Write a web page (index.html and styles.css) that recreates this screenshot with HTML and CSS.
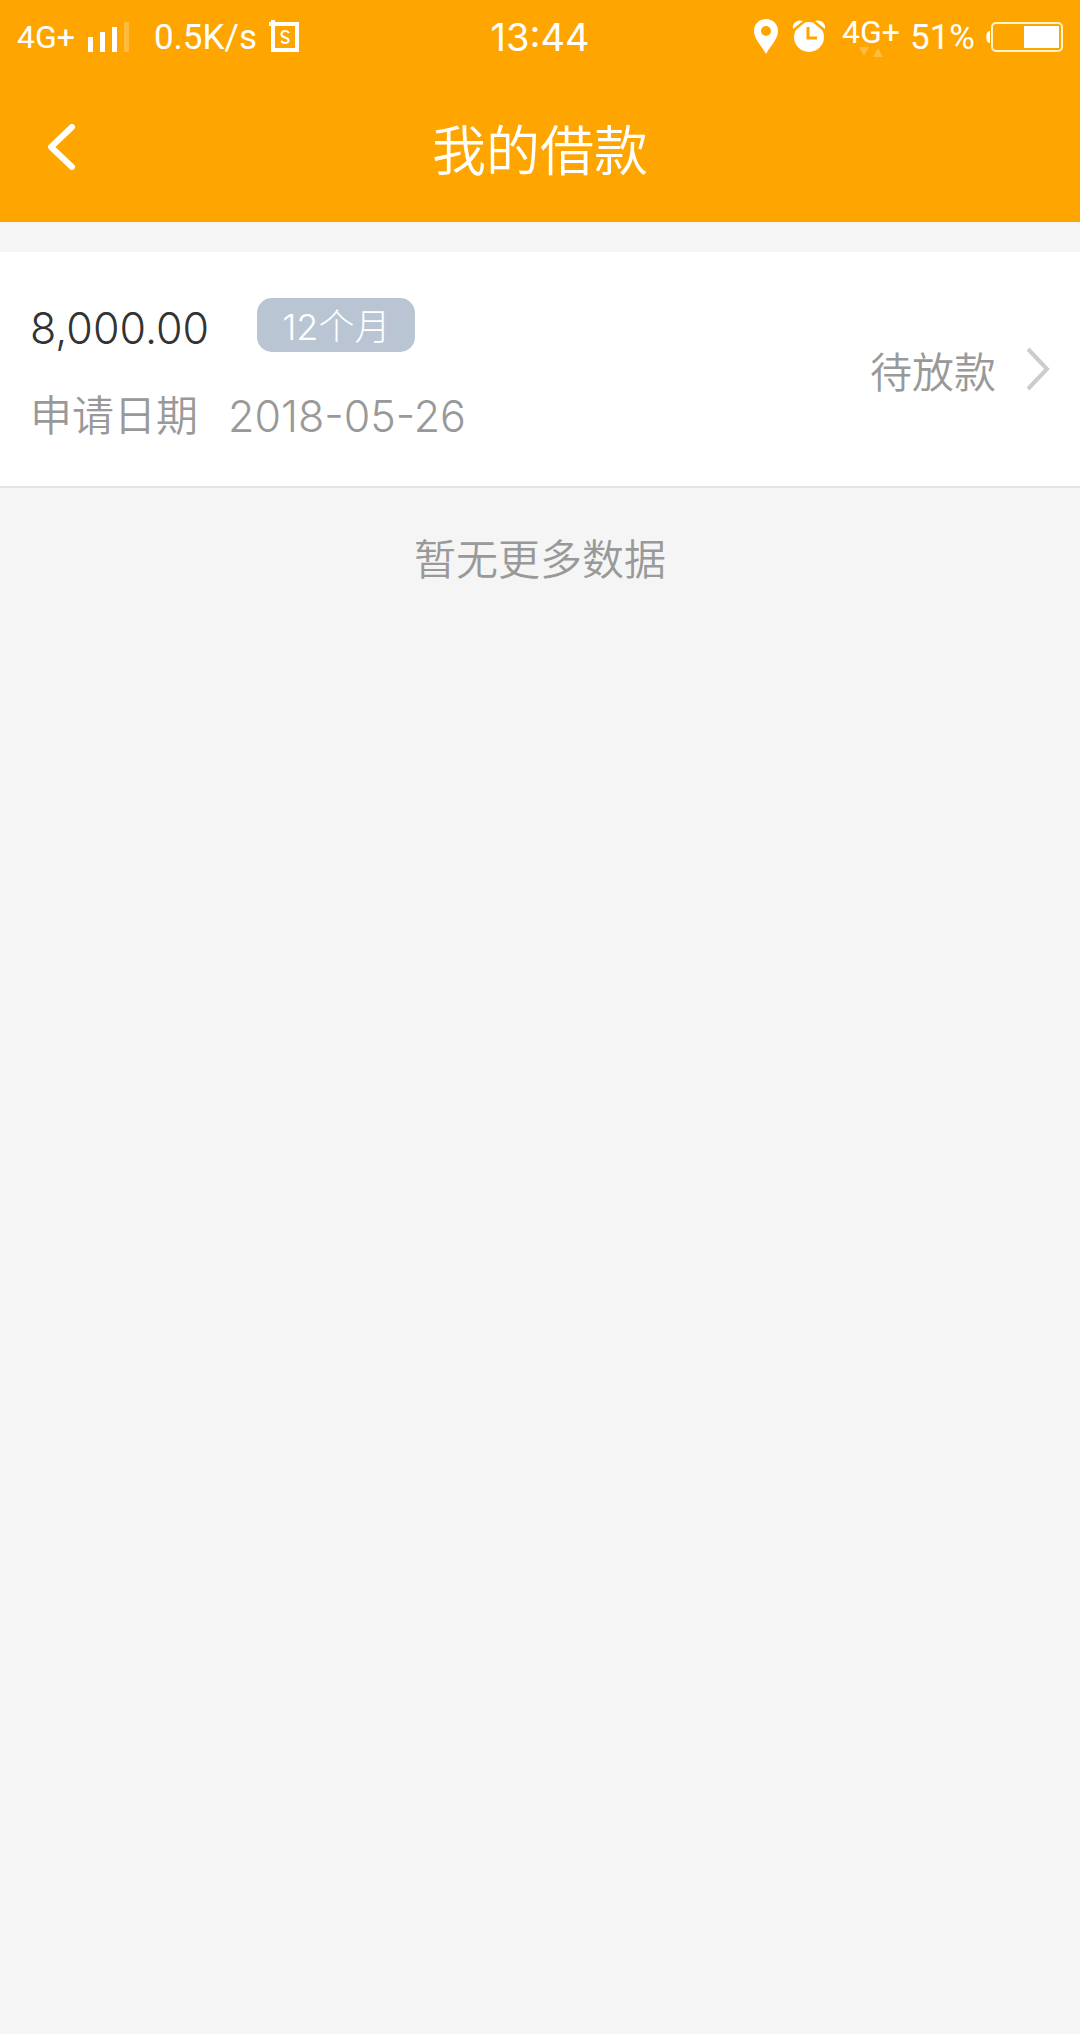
FILE: index.html
```html
<!DOCTYPE html>
<html lang="zh-CN">
<head>
  <meta charset="UTF-8" />
  <meta name="viewport" content="width=device-width, initial-scale=1.0" />
  <title>我的借款</title>
  <link rel="stylesheet" href="styles.css">
</head>
<body>

  <header class="top">
    <!-- Status bar -->
    <div class="status-bar">
      <div class="status-left">
        <span class="network">4G+</span>
        <svg class="signal" width="42" height="30" viewBox="0 0 42 30" fill="#fff" aria-hidden="true">
          <path d="M0 15h5v15H0zM12 10h5v20h-5zM24 5h5v25h-5z" />
          <path d="M36 0h5v30h-5z" opacity=".25" />
        </svg>
        <span class="speed">0.5K/s</span>
        <svg class="badge-s" width="30" height="34" viewBox="0 0 30 34" fill="none" stroke="#fff" aria-hidden="true">
          <path d="M4 4h24v26H4z" stroke-width="4" />
          <path d="M0 4h4M4 0v4" stroke-width="4" />
          <path d="M20 13c-1-2-3-2-4-2-4 0-5 5-1 6l2 1c4 1 3 5-1 5-2 0-3-1-4-2" stroke-width="2" />
        </svg>
      </div>
      <time class="clock">13:44</time>
      <div class="status-right">
        <svg width="24" height="36" viewBox="0 0 24 36" aria-hidden="true">
          <path fill="#fff" fill-rule="evenodd" d="M12 0C5 0 0 5 0 12c0 8 7 14 12 23 5-9 12-15 12-23C24 5 19 0 12 0zm0 7a5 5 0 1 1 0 10 5 5 0 0 1 0-10z" />
        </svg>
        <svg class="alarm" width="34" height="36" viewBox="0 0 34 36" aria-hidden="true">
          <circle cx="17" cy="18" r="15" fill="#fff" />
          <path d="M1 10 11 2C5 0 0 4 1 10zM33 10 23 2c6-2 11 2 10 8z" fill="#fff" />
          <path d="M0 13 12 3M34 13 22 3" stroke="#ffa500" stroke-width="2" />
          <path d="M16 8v11h9" fill="none" stroke="#ffa500" stroke-width="3" />
        </svg>
        <span class="data">
          <span class="network">4G+</span>
          <svg class="arrows" width="24" height="10" viewBox="0 0 24 10" fill="#fff" opacity=".25" aria-hidden="true">
            <path d="M0 0h10L5 9zM14 10h10l-5-9z" />
          </svg>
        </span>
        <span class="percent">51%</span>
        <svg class="battery" width="78" height="30" viewBox="0 0 78 30" aria-hidden="true">
          <path d="M5 9v12c-5 0-5-12 0-12z" fill="#fff" />
          <rect x="7" y="1" width="70" height="28" rx="4" fill="none" stroke="#fff5cf" stroke-width="2" />
          <path d="M39 4h35v22H39z" fill="#fff" />
        </svg>
      </div>
    </div>

    <!-- Title bar -->
    <nav class="nav-bar">
      <button class="back" type="button" aria-label="返回">
        <svg width="28" height="46" viewBox="0 0 28 46" fill="none" stroke="#fff" stroke-width="6" stroke-linecap="round" stroke-linejoin="round">
          <path d="M24 3 3 23l21 20" />
        </svg>
      </button>
      <h1>我的借款</h1>
    </nav>
  </header>

  <main>
    <a class="loan" href="#">
      <div class="loan-info">
        <div class="loan-row">
          <span class="amount">8,000.00</span>
          <span class="term">12个月</span>
        </div>
        <div class="loan-date">
          <span>申请日期</span>
          <time class="date" datetime="2018-05-26">2018-05-26</time>
        </div>
      </div>
      <div class="loan-state">
        <span>待放款</span>
        <svg width="24" height="44" viewBox="0 0 24 44" fill="none" stroke="#ccc" stroke-width="4" aria-hidden="true">
          <path d="M2 2l19 20L2 42" />
        </svg>
      </div>
    </a>
    <p class="no-more">暂无更多数据</p>
  </main>

</body>
</html>
```
FILE: styles.css
```css
* {
  box-sizing: border-box;
}

body {
  margin: 0;
  min-height: 100vh;
  background: #f5f5f5;
  color: #333;
  font-family: Inter, 'Noto Sans CJK SC', sans-serif;
  font-size: 42px;
  font-weight: 350;
}

.top {
  background: #ffa500;
  color: #fff;
}

/* Status bar */
.status-bar {
  display: grid;
  grid-template-columns: 1fr auto 1fr;
  align-items: center;
  height: 74px;
  padding: 0 17px;
  font-family: Roboto, sans-serif;
  font-size: 35px;
  font-weight: 400;
  line-height: 40px;
}

.status-left,
.status-right {
  display: flex;
  align-items: center;
}

.status-right {
  justify-content: flex-end;
}

.network {
  font-size: 32px;
}

.signal {
  margin: 0 24px 0 13px;
}

.speed,
.percent {
  padding-top: 2px;
}

.badge-s {
  margin-left: 12px;
}

.clock {
  font-family: Inter, sans-serif;
  font-size: 38px;
}

.alarm {
  margin: 0 16px 0 14px;
}

.data {
  display: flex;
  flex-direction: column;
  align-items: center;
  line-height: 30px;
}

.percent {
  margin: 0 10px;
}

/* Title bar */
.nav-bar {
  display: grid;
  grid-template-columns: 1fr auto 1fr;
  align-items: center;
  height: 148px;
  padding: 0 24px 2px;
}

.back {
  display: flex;
  justify-self: start;
  padding: 24px;
  border: none;
  background: none;
  cursor: pointer;
}

h1 {
  margin: 0;
  padding-top: 10px;
  font-size: 54px;
  font-weight: 350;
  line-height: 80px;
}

/* Loan list */
.loan {
  display: flex;
  align-items: center;
  margin-top: 30px;
  padding: 46px 30px 42px;
  border-bottom: 2px solid #e3e3e3;
  background: #fff;
  color: #999;
  text-decoration: none;
}

.loan-info {
  flex: 1;
}

.loan-row {
  display: flex;
  align-items: center;
  gap: 48px;
}

.amount,
.date {
  font-size: 43px;
  font-weight: 300;
}

.amount {
  padding-top: 6px;
  color: #333;
  line-height: 48px;
}

.term {
  padding: 4px 25px 0;
  border-radius: 15px;
  background: #bac5d3;
  color: #fff;
  font-size: 36px;
  font-weight: 300;
  line-height: 50px;
}

.loan-date {
  display: flex;
  gap: 30px;
  margin-top: 36px;
  line-height: 56px;
}

.loan-state {
  display: flex;
  align-items: center;
  gap: 30px;
  padding-bottom: 4px;
}

.no-more {
  margin: 42px 0;
  color: #999;
  line-height: 60px;
  text-align: center;
}
```
